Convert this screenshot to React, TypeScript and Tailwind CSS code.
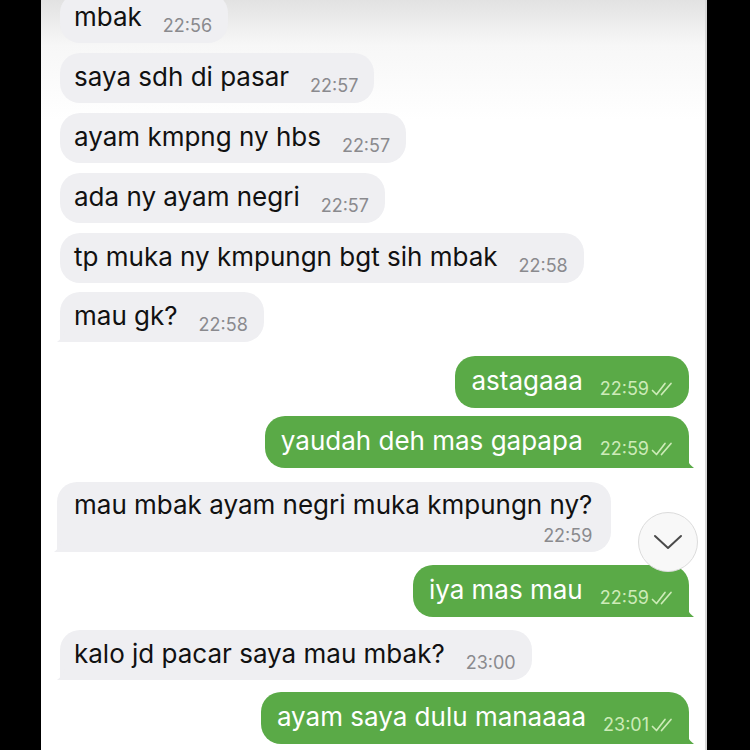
import React from 'react';

type Msg = {
  id: number;
  text: string;
  time: string;
  out?: boolean;
  tail?: boolean;
  wrap?: boolean;
  mt: string;
};

const messages: Msg[] = [
  { id: 1, text: 'mbak', time: '22:56', mt: 'mt-[-7px]' },
  { id: 2, text: 'saya sdh di pasar', time: '22:57', mt: 'mt-[10px]' },
  { id: 3, text: 'ayam kmpng ny hbs', time: '22:57', mt: 'mt-[10px]' },
  { id: 4, text: 'ada ny ayam negri', time: '22:57', mt: 'mt-[10px]' },
  { id: 5, text: 'tp muka ny kmpungn bgt sih mbak', time: '22:58', mt: 'mt-[10px]' },
  { id: 6, text: 'mau gk?', time: '22:58', tail: true, mt: 'mt-[9px]' },
  { id: 7, text: 'astagaaa', time: '22:59', out: true, mt: 'mt-[14px]' },
  { id: 8, text: 'yaudah deh mas gapapa', time: '22:59', out: true, tail: true, mt: 'mt-[8px]' },
  { id: 9, text: 'mau mbak ayam negri muka kmpungn ny?', time: '22:59', tail: true, wrap: true, mt: 'mt-[14px]' },
  { id: 10, text: 'iya mas mau', time: '22:59', out: true, tail: true, mt: 'mt-[13px]' },
  { id: 11, text: 'kalo jd pacar saya mau mbak?', time: '23:00', tail: true, mt: 'mt-[13px]' },
  { id: 12, text: 'ayam saya dulu manaaaa', time: '23:01', out: true, tail: true, mt: 'mt-[12px]' },
];

const ReadTicks = () => (
  <svg width="24" height="15" viewBox="0 0 24 15" className="ml-[2px] mb-[1px]" fill="none" stroke="#cdebb8" strokeWidth="1.7" strokeLinecap="round" strokeLinejoin="round">
    <path d="M1.5 8.5 L5.5 12.5 L14 1.5" />
    <path d="M10.5 12.5 L20 1.5" />
  </svg>
);

const OutTail = () => (
  <svg width="20" height="20" viewBox="0 0 20 20" className="absolute right-[-8px] bottom-0">
    <path d="M0 0 L8 0 C8 9 11 16 17 20 C11 20.5 5 19.5 0 18 Z" fill="#5aaa47" />
  </svg>
);

const InTail = () => (
  <svg width="20" height="20" viewBox="0 0 20 20" className="absolute left-[-6px] bottom-0">
    <path d="M20 0 L12 0 C12 9 9 16 3 20 C9 20.5 15 19.5 20 18 Z" fill="#efeff2" />
  </svg>
);

const Bubble = ({ m }: { m: Msg }) => {
  if (m.out) {
    return (
      <div className={`flex justify-end pr-[16px] ${m.mt}`}>
        <div className={`relative h-[52px] bg-[#5aaa47] rounded-[20px] ${m.tail ? 'rounded-br-[4px]' : ''} pl-[16px] pr-[14px] flex items-center`}>
          <span className="text-[26px] text-white leading-none mb-[2px]">{m.text}</span>
          <span className="flex items-end ml-[17px] mt-[14px]">
            <span className="text-[18px] text-[#cdebb8] leading-none">{m.time}</span>
            <ReadTicks />
          </span>
          {m.tail && <OutTail />}
        </div>
      </div>
    );
  }

  if (m.wrap) {
    return (
      <div className={`flex pl-[16px] ${m.mt}`}>
        <div className="relative h-[70px] bg-[#efeff2] rounded-[20px] rounded-bl-[4px] pl-[17px] pr-[19px] pt-[8px] flex flex-col">
          <span className="text-[26px] text-[#111] leading-[30px]">{m.text}</span>
          <span className="self-end text-[18px] text-[#8a8a8e] leading-none mt-[7px]">{m.time}</span>
          <InTail />
        </div>
      </div>
    );
  }

  return (
    <div className={`flex pl-[19px] ${m.mt}`}>
      <div className={`relative h-[50px] bg-[#efeff2] rounded-[20px] ${m.tail ? 'rounded-bl-[4px]' : ''} pl-[14px] pr-[16px] flex items-center`}>
        <span className="text-[26px] text-[#111] leading-none mb-[2px]">{m.text}</span>
        <span className="text-[18px] text-[#8a8a8e] leading-none ml-[21px] mt-[15px]">{m.time}</span>
        {m.tail && <InTail />}
      </div>
    </div>
  );
};

export default function App() {
  return (
    <div className="w-[750px] h-[750px] flex bg-black overflow-hidden" style={{ fontFamily: 'Inter, "Noto Sans", sans-serif' }}>
      <div className="w-[41px] shrink-0 bg-black" />
      <div className="relative w-[666px] h-full bg-[linear-gradient(to_bottom,#e2e2e2,#f7f7f7_45px,#ffffff_120px)] border-r-[2px] border-[#d8d8d8] flex flex-col">
        {messages.map((m) => (
          <Bubble key={m.id} m={m} />
        ))}
        <div className="absolute left-[597px] top-[512px] w-[60px] h-[60px] rounded-full bg-[#f8f8f8] border border-[#dcdcdc] flex items-center justify-center">
          <svg width="30" height="18" viewBox="0 0 30 18" fill="none" stroke="#4a4a4a" strokeWidth="2" strokeLinecap="round" strokeLinejoin="round">
            <path d="M2 3 L15 15 L28 3" />
          </svg>
        </div>
      </div>
      <div className="flex-1 bg-black" />
    </div>
  );
}
